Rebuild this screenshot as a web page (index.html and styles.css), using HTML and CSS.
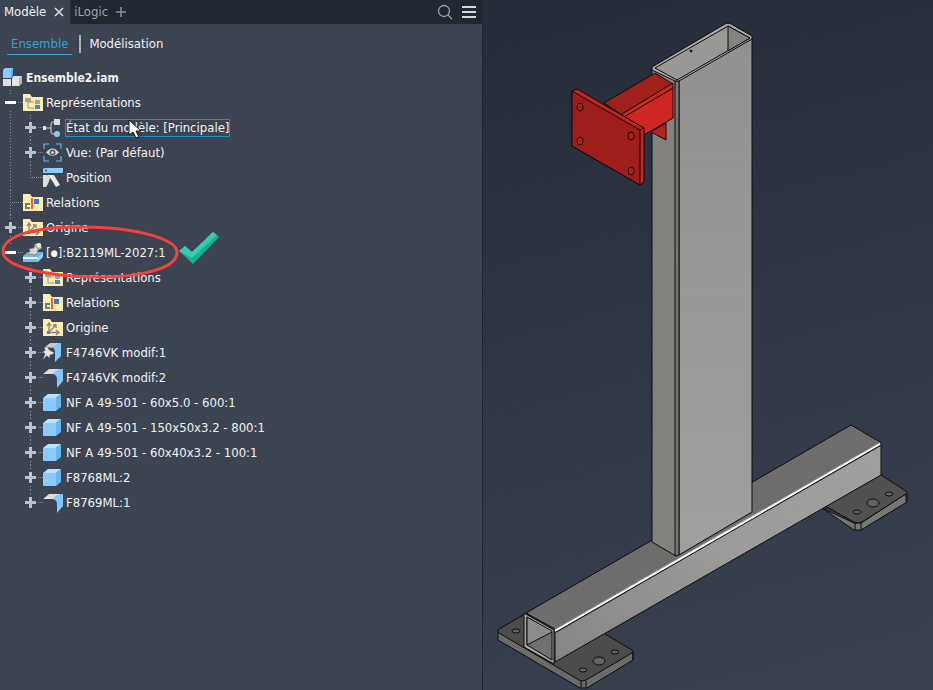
FILE: index.html
```html
<!DOCTYPE html>
<html lang="fr">
<head>
<meta charset="utf-8">
<title>Ensemble2.iam</title>
<link rel="stylesheet" href="styles.css">
</head>
<body>
<svg class="defs" aria-hidden="true">
  <symbol id="folder" viewBox="0 0 20 20"><path d="M0 1h7l2 3h11v14H0z" fill="#ffedb0"/></symbol>
  <symbol id="i-rep" viewBox="0 0 20 20"><use href="#folder"/><path d="M5 8v7h6M5 9h6" fill="none" stroke="#99978e"/><path d="M2 5h6v4H2zM12 7h5v4h-5z" fill="#a2a19a"/><path d="M12 12h5v4h-5z" fill="#3e8cc4"/></symbol>
  <symbol id="i-rel" viewBox="0 0 20 20"><use href="#folder"/><path d="M7 11H3v4h4" fill="none" stroke="#77777b" stroke-width="2"/><path d="M8 5h2v11H8z" fill="#e8603c"/><path d="M11 6h5v5h-5z" fill="#2f7fc1"/></symbol>
  <symbol id="i-ori" viewBox="0 0 20 20"><use href="#folder"/><path d="M6 13V5M4 8l2-3 2 3M7 14.500h8M13 12l3 2.500-3 2.500M7 13l5-5M10 7h3v3" fill="none" stroke="#85837a" stroke-width="1.300"/><path d="M4 13h3v3H4z" fill="#2095e8"/></symbol>
  <symbol id="i-asm" viewBox="0 0 20 20"><path d="M0 2l2-2h8v8l-2 2H0z" fill="#8acbff"/><path d="M8 2l2-2v8l-2 2z" fill="#58aee8"/><path d="M0 11h8v7H0z" fill="#dedede"/><path d="M9 10l2-2h8v7l-3 3H9z" fill="#e4e4e4"/><path d="M16 10l3-2v7l-3 3z" fill="#b5b5b5"/></symbol>
  <symbol id="i-state" viewBox="0 0 20 20"><path d="M0 8h3v4H0z" fill="#e3e3e3"/><path d="M3 10h5M12 4H10Q8 4 8 6v8q0 2 2 2h2" fill="none" stroke="#d4d4d4"/><path d="M11 1h6v6h-6z" fill="#dedede"/><circle cx="14" cy="16" r="3" fill="#83caff"/></symbol>
  <symbol id="i-view" viewBox="0 0 20 20"><path d="M1 6V1h5M13 1h5v5M18 13v5h-5M6 18H1v-5" fill="none" stroke="#65b6ef" stroke-width="1.200"/><path d="M3 9.500q6.500-8 13 0-6.500 7-13 0z" fill="#d8d8d8"/><circle cx="9.500" cy="9.500" r="3" fill="#555c66"/><circle cx="9.500" cy="9.500" r="1.300" fill="#e5e5e5"/></symbol>
  <symbol id="i-pos" viewBox="0 0 20 20"><path d="M0 1l1-1h19v4l-1 1H0z" fill="#8aceff"/><circle cx="3" cy="2.500" r="1" fill="#335879"/><path d="M0 7h4l3 3-2 6-2 3H0z" fill="#dedede"/><path d="M4 7h7l6 10-4 2-5-8z" fill="#e9e8e6"/></symbol>
  <symbol id="i-part" viewBox="0 0 20 20"><path d="M0 5h13v13H1q-1 0-1-1z" fill="#8acaff"/><path d="M0 5l5-4h13l-5 4z" fill="#bce1ff"/><path d="M13 5l5-4v13l-5 4z" fill="#64b8ef"/></symbol>
  <symbol id="i-sheet" viewBox="0 0 20 20"><path d="M0 6l6-5h12q-4 1-5 5z" fill="#dfdcd9"/><path d="M10 6q2-5 10-5v12l-6 7v-9q0-4-4-5z" fill="#80c7ff"/></symbol>
  <symbol id="pin" viewBox="0 0 20 20"><path d="M3 2l4-1 1 3 4 3 3 1-1 2-4 1-1 4-3-3-5 5 3-7-3-3 3-1z" fill="#e6e6e4" stroke="#6d747d" stroke-width=".5"/></symbol>
  <symbol id="i-pinsheet" viewBox="0 0 20 20"><path d="M2 4l5-4h10l-5 5z" fill="#c9c9c8"/><path d="M11 5q1-5 7-5v13l-6 6V9z" fill="#80c7ff"/><use href="#pin" x="-1" y="3" width="16" height="16"/></symbol>
  <symbol id="i-pinasm" viewBox="0 0 20 20"><path d="M0 13l5-4h15l-5 5H0z" fill="#68b6f1"/><path d="M0 14h15v2H0z" fill="#f0f3f4"/><path d="M0 16h15v3H0z" fill="#75bbee"/><path d="M15 14l5-5v5l-5 5z" fill="#9ad1f8"/><path d="M5 12l2-4-1-2 5-1 1-4 5-1 2 5-4 2-1 4-3 1-2-1z" fill="#d5d5d2" stroke="#76736d" stroke-width=".6"/><path d="M12 2q1 3 4 4" fill="none" stroke="#85827b"/><circle cx="16" cy="2" r="2" fill="#f1f1ee"/></symbol>
</svg>
<main class="app">
  <aside class="browser">
    <header class="tabs">
      <div class="tab tab-on"><button>Modèle</button><button class="glyph" aria-label="Fermer"><svg width="10" height="10" viewBox="0 0 10 10"><path d="M1 1l8 8M9 1L1 9" stroke="#e2e2e2" stroke-width="1.500"/></svg></button></div>
      <div class="tab"><button>iLogic</button><button class="glyph" aria-label="Ajouter"><svg width="10" height="10" viewBox="0 0 10 10"><path d="M5 0v10M0 5h10" stroke="#929292" stroke-width="1.500"/></svg></button></div>
      <div class="tools">
        <button class="glyph" aria-label="Rechercher"><svg width="16" height="16" viewBox="0 0 16 16" fill="none" stroke="#a0a0a0" stroke-width="1.300"><circle cx="7" cy="7" r="5.500"/><path d="M11 11l4 4"/></svg></button>
        <button class="glyph" aria-label="Menu"><svg width="14" height="12" viewBox="0 0 14 12"><path d="M0 1h14M0 6h14M0 11h14" stroke="#d8d8d8" stroke-width="2"/></svg></button>
      </div>
    </header>
    <nav class="modes"><button class="mode mode-on">Ensemble</button><span class="bar"></span><button class="mode">Modélisation</button></nav>
    <section class="tree">
      <div class="row root"><svg class="icon"><use href="#i-asm"/></svg><span class="label">Ensemble2.iam</span></div>
      <ul>
        <li><div class="row"><button class="toggle minus" aria-label="Réduire"></button><svg class="icon"><use href="#i-rep"/></svg><span class="label">Représentations</span></div>
          <ul>
            <li><div class="row"><button class="toggle" aria-label="Développer"></button><svg class="icon"><use href="#i-state"/></svg><span class="label selected">État du modèle: [Principale]<svg class="pointer" width="14" height="20" viewBox="0 0 14 20"><path d="M1 1v15l4-3 3 6 3-1-3-6h5z" fill="#fff" stroke="#111"/></svg></span></div></li>
            <li><div class="row"><button class="toggle" aria-label="Développer"></button><svg class="icon"><use href="#i-view"/></svg><span class="label">Vue: (Par défaut)</span></div></li>
            <li><div class="row"><span class="toggle none"></span><svg class="icon"><use href="#i-pos"/></svg><span class="label">Position</span></div></li>
          </ul>
        </li>
        <li><div class="row"><span class="toggle none"></span><svg class="icon"><use href="#i-rel"/></svg><span class="label">Relations</span></div></li>
        <li><div class="row"><button class="toggle" aria-label="Développer"></button><svg class="icon"><use href="#i-ori"/></svg><span class="label">Origine</span></div></li>
        <li><div class="row"><button class="toggle minus" aria-label="Réduire"></button><svg class="icon"><use href="#i-pinasm"/></svg><span class="label">[<span class="dot">●</span>]:B2119ML-2027:1</span>
            <svg class="note" width="222" height="60" viewBox="0 222 222 60"><path d="M3 251C4 235 38 226 82 227C132 227 178 238 177 253C176 269 138 278 94 277C44 276 2 266 3 251z" fill="none" stroke="#f8403f" stroke-width="3"/><path d="M179 251l6-5 7 6 21-20 6 5-26 27z" fill="#12b094"/><path d="M179 251l6-5 7 6 21-20 4 3-25 23z" fill="#36caae"/></svg></div>
          <ul>
            <li><div class="row"><button class="toggle" aria-label="Développer"></button><svg class="icon"><use href="#i-rep"/></svg><span class="label">Représentations</span></div></li>
            <li><div class="row"><button class="toggle" aria-label="Développer"></button><svg class="icon"><use href="#i-rel"/></svg><span class="label">Relations</span></div></li>
            <li><div class="row"><button class="toggle" aria-label="Développer"></button><svg class="icon"><use href="#i-ori"/></svg><span class="label">Origine</span></div></li>
            <li><div class="row"><button class="toggle" aria-label="Développer"></button><svg class="icon"><use href="#i-pinsheet"/></svg><span class="label">F4746VK modif:1</span></div></li>
            <li><div class="row"><button class="toggle" aria-label="Développer"></button><svg class="icon"><use href="#i-sheet"/></svg><span class="label">F4746VK modif:2</span></div></li>
            <li><div class="row"><button class="toggle" aria-label="Développer"></button><svg class="icon"><use href="#i-part"/></svg><span class="label">NF A 49-501 - 60x5.0 - 600:1</span></div></li>
            <li><div class="row"><button class="toggle" aria-label="Développer"></button><svg class="icon"><use href="#i-part"/></svg><span class="label">NF A 49-501 - 150x50x3.2 - 800:1</span></div></li>
            <li><div class="row"><button class="toggle" aria-label="Développer"></button><svg class="icon"><use href="#i-part"/></svg><span class="label">NF A 49-501 - 60x40x3.2 - 100:1</span></div></li>
            <li><div class="row"><button class="toggle" aria-label="Développer"></button><svg class="icon"><use href="#i-part"/></svg><span class="label">F8768ML:2</span></div></li>
            <li><div class="row"><button class="toggle" aria-label="Développer"></button><svg class="icon"><use href="#i-sheet"/></svg><span class="label">F8769ML:1</span></div></li>
          </ul>
        </li>
      </ul>
    </section>
  </aside>
  <section class="viewport">
    <svg class="model" viewBox="483 0 450 690" preserveAspectRatio="xMinYMin meet" role="img" aria-label="Poteau mécano-soudé">
      <defs>
        <linearGradient id="front" x1="0" y1="0" x2="0" y2="1"><stop offset="0" stop-color="#92918f"/><stop offset="1" stop-color="#a1a09e"/></linearGradient>
        <linearGradient id="beam" x1="0" y1="1" x2="1" y2="0"><stop offset="0" stop-color="#868583"/><stop offset=".5" stop-color="#9c9b99"/><stop offset="1" stop-color="#a09f9d"/></linearGradient>
      </defs>
      <g stroke="#0c0c0c" stroke-width="1" stroke-linejoin="round">
        <!-- right foot plate -->
        <path d="M822 508l32 15h7l46-30v9l-46 28h-7z" fill="#777775"/>
        <path d="M825 506l56-31 25 16q2 1 0 3l-44 28q-4 2-8 0z" fill="#51524f"/>
        <path d="M855 523v7M861 522v8M906 494v8" fill="none"/>
        <ellipse cx="857" cy="512" rx="4" ry="2" fill="#61615f"/><ellipse cx="873" cy="503" rx="6" ry="4" fill="#61615f"/><ellipse cx="889" cy="494" rx="4" ry="2" fill="#61615f"/>
        <!-- left foot plate -->
        <path d="M498 632v8l82 48h7l46-28v-8l-50 20z" fill="#6b6b69"/>
        <path d="M499 629l26-15 80 20 27 16q2 1 0 3l-46 27q-4 2-7 0l-80-47q-3-2 0-4z" fill="#4b4b4a"/>
        <path d="M581 681v7M586 681v7M633 652v8" fill="none"/>
        <ellipse cx="516" cy="631" rx="4" ry="2" fill="#61615f"/><ellipse cx="583" cy="670" rx="4" ry="2" fill="#61615f"/><ellipse cx="599" cy="661" rx="6" ry="4" fill="#61615f"/><ellipse cx="615" cy="652" rx="4" ry="2" fill="#61615f"/>
        <!-- horizontal beam -->
        <path d="M526 613L851 425l29 17-325 187z" fill="#6e6d6b"/>
        <path d="M555 630L880 442l1 3v30L555 662z" fill="url(#beam)"/>
        <path d="M555 631L880 444" stroke-width="4"/>
        <path d="M555 630L880 443" stroke="#8b8a88" stroke-width="3"/>
        <path d="M555 631L880 444" stroke="#fff" stroke-width="2"/>
        <path d="M524 613l30 17v34l-30-17z" fill="#a6a5a2"/>
        <path d="M527 617l25 15v28l-25-15z" fill="#71706e"/>
        <path d="M527 617l25 14v1l-25 13z" fill="#8d8c8a"/>
        <!-- column -->
        <path d="M652 67l24 14v475l-24-14z" fill="#83827f"/>
        <path d="M679 80l73-42v474l-73 43z" fill="url(#front)"/>
        <path d="M675 81h4v474l-4 1z" fill="#777674"/>
        <path d="M652 70v-3L725 24q3-2 6 0l21 12v3l-73 42h-4z" fill="#aaa9a7"/>
        <path d="M655 68l73-42 22 12-73 42z" fill="#999896"/>
        <path d="M728 26l22 12-22 13z" fill="#84837f"/>
        <ellipse cx="691" cy="51" rx="1" ry="1" fill="#333"/>
        <!-- bracket arm -->
        <path d="M651 132l15-9v17z" fill="#b7211b"/>
        <path d="M604 103l51-30 18 11-51 31z" fill="#a0201b"/>
        <path d="M622 114l51-31v35l-29 17-20-10z" fill="#cf2722"/>
        <path d="M624 117l49-29" fill="none"/>
        <path d="M572 91l5-2 67 39v54l-4 3-68-39z" fill="#c5241f"/>
        <path d="M572 91l68 39v55l-68-39z" fill="#9e1f1a"/>
        <path d="M640 130l4-2" fill="none"/>
        <g fill="#b3201c"><ellipse cx="580" cy="107" rx="3" ry="4"/><ellipse cx="631" cy="136" rx="3" ry="4"/><ellipse cx="580" cy="141" rx="3" ry="4"/><ellipse cx="631" cy="171" rx="3" ry="4"/></g>
      </g>
    </svg>
  </section>
</main>
</body>
</html>
```
FILE: styles.css
```css
* { box-sizing: border-box; }
body { margin: 0; background: #3c4452; color: #f2f2f2; font: 13px/16px "DejaVu Sans Condensed", "Noto Sans", sans-serif; }
button { padding: 0; border: 0; background: none; color: inherit; font: inherit; }
ul { margin: 0; padding: 0; list-style: none; }
.defs { position: absolute; width: 0; height: 0; }
.app { display: grid; grid-template-columns: minmax(270px, 483fr) 450fr; min-height: 100vh; }
.browser { background: #3c4452; border-right: 1px solid #20252d; }
.tabs { display: flex; height: 24px; background: #222831; }
.tab { display: flex; align-items: center; gap: 8px; padding: 0 4px; color: #a3a5a8; }
.tab-on { background: #3c4452; color: #f2f2f2; padding-right: 6px; }
.glyph { display: flex; }
.tools { display: flex; align-items: center; gap: 9px; margin-left: auto; padding-right: 6px; }
.modes { display: flex; align-items: center; gap: 7px; height: 40px; padding: 0 7px; }
.mode { padding: 0 1px; line-height: 20px; }
.mode-on { padding: 0 4px; color: #2fa3dc; border-bottom: 1px solid #2fa3dc; }
.bar { width: 2px; height: 18px; background: #a9adb3; }
.tree { padding-top: 1px; }
.row { position: relative; display: flex; align-items: center; height: 25px; }
.root { padding-left: 3px; font-size: 12px; font-weight: bold; }
.root .label { margin-left: 2px; }
.icon { flex: none; width: 20px; height: 20px; }
.label { position: relative; margin-left: 2px; border: 1px solid transparent; white-space: nowrap; }
.selected { border-color: #1b8fc6; }
.dot { font-size: 9px; vertical-align: 1px; line-height: 1; }
.tree ul ul { padding-left: 20px; }
.tree li { background: repeating-linear-gradient(#8b919b 0 1px, transparent 1px 3px) 10px 0 / 1px 100% no-repeat; }
.tree li:last-child { background-size: 1px 13px; }
.toggle { position: relative; flex: none; width: 11px; height: 15px; margin: 0 7px 0 5px; background: linear-gradient(#b9c1d0, #b9c1d0) center / 11px 3px no-repeat, linear-gradient(#b9c1d0, #b9c1d0) center / 3px 11px no-repeat, #3c4452; }
.minus { background: linear-gradient(#fff, #fff) center / 11px 3px no-repeat, #3c4452; }
.none { background: none; }
.toggle::after { content: ""; position: absolute; left: 13px; right: -7px; top: 7px; border-top: 1px dotted #8b919b; }
.none::after { left: 5px; }
.pointer { position: absolute; left: 62px; top: -1px; }
.note { position: absolute; left: 0; top: -18px; z-index: 1; pointer-events: none; }
.viewport { background: linear-gradient(165deg, #262c39, #303747 50%, #3a4250); }
.model { display: block; width: 100%; height: auto; }
```
